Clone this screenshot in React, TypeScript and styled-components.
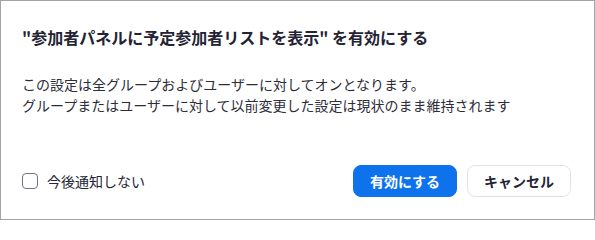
import React, { useState } from "react";
import styled, { createGlobalStyle } from "styled-components";

const GlobalStyle = createGlobalStyle`
  html, body {
    margin: 0;
    padding: 0;
    background: #ffffff;
  }
  * {
    box-sizing: border-box;
  }
`;

const Dialog = styled.div`
  display: flex;
  flex-direction: column;
  width: 595px;
  height: 220px;
  border: 1px solid #a3a3a3;
  padding: 24px 23px 22px 21px;
  background: #ffffff;
  font-family: "Noto Sans CJK JP", "Noto Sans", sans-serif;
  color: #232333;
`;

const Title = styled.h2`
  margin: 0;
  font-size: 16px;
  font-weight: 700;
  line-height: 24px;
  color: #232333;
`;

const Body = styled.div`
  margin-top: 25px;
  font-size: 14px;
  line-height: 21px;
  color: #2d2d38;

  p {
    margin: 0;
  }
`;

const Footer = styled.div`
  display: flex;
  align-items: center;
  justify-content: space-between;
  margin-top: auto;
`;

const CheckLabel = styled.label`
  display: flex;
  align-items: center;
  gap: 9px;
  font-size: 14px;
  line-height: 20px;
  color: #232333;
  cursor: pointer;
`;

const Box = styled.span<{ $checked: boolean }>`
  flex: none;
  width: 16px;
  height: 16px;
  border: 1px solid #6e7680;
  border-radius: 4px;
  background: ${(p) => (p.$checked ? "#0e72ed" : "#ffffff")};
`;

const Buttons = styled.div`
  display: flex;
  gap: 10px;
`;

const Button = styled.button<{ $primary?: boolean }>`
  height: 32px;
  width: 104px;
  border-radius: 8px;
  font-family: inherit;
  font-size: 14px;
  font-weight: 700;
  cursor: pointer;
  border: 1px solid ${(p) => (p.$primary ? "#0e72ed" : "#dfe3e8")};
  background: ${(p) => (p.$primary ? "#0e72ed" : "#ffffff")};
  color: ${(p) => (p.$primary ? "#ffffff" : "#232333")};
`;

function App() {
  const [checked, setChecked] = useState(false);

  return (
    <>
      <GlobalStyle />
      <Dialog>
        <Title>"参加者パネルに予定参加者リストを表示" を有効にする</Title>
        <Body>
          <p>この設定は全グループおよびユーザーに対してオンとなります。</p>
          <p>グループまたはユーザーに対して以前変更した設定は現状のまま維持されます</p>
        </Body>
        <Footer>
          <CheckLabel onClick={() => setChecked(!checked)}>
            <Box $checked={checked} />
            今後通知しない
          </CheckLabel>
          <Buttons>
            <Button $primary>有効にする</Button>
            <Button>キャンセル</Button>
          </Buttons>
        </Footer>
      </Dialog>
    </>
  );
}

export default App;
